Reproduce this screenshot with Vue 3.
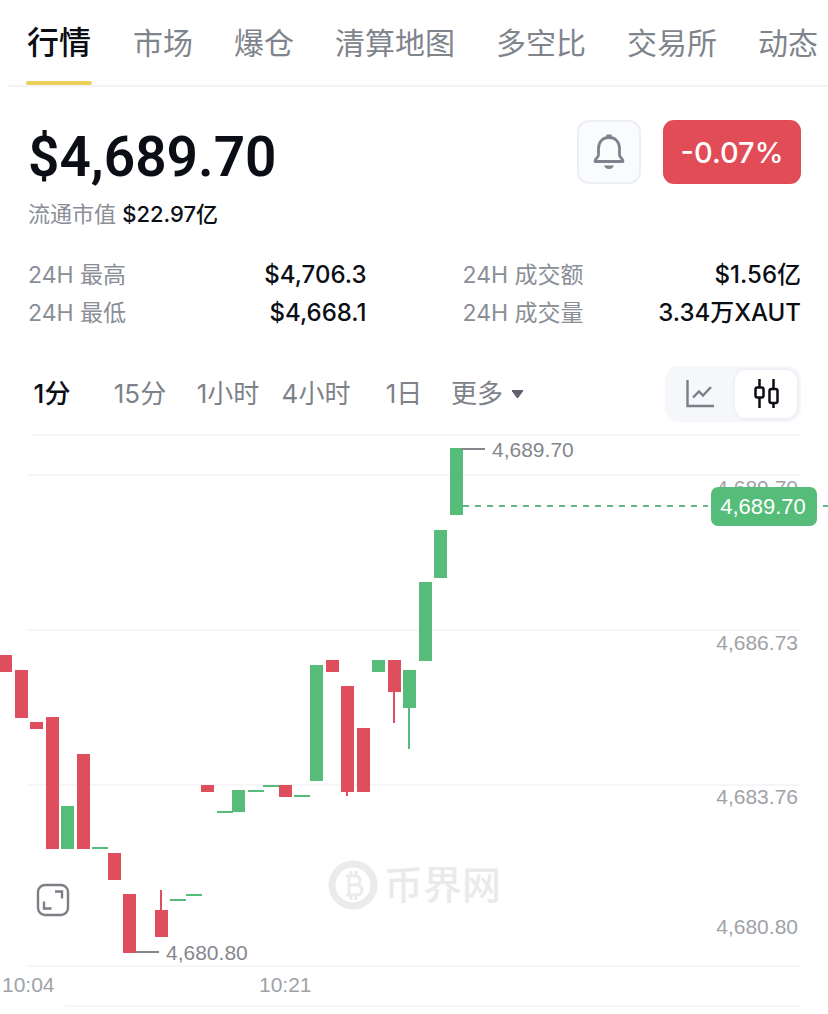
<template>
  <div class="market-page">
    <nav class="tabs">
      <a
        v-for="tab in tabs"
        :key="tab"
        href="#"
        class="tab"
        :class="{ active: activeTab === tab }"
        @click.prevent="activeTab = tab"
      >{{ tab }}</a>
    </nav>

    <header class="summary">
      <div class="price-block">
        <h1 class="price">$4,689.70</h1>
        <p class="cap">流通市值 <strong>$22.97亿</strong></p>
      </div>
      <div class="actions">
        <button class="bell" aria-label="价格提醒">
          <svg width="36" height="40" viewBox="0 0 36 40" fill="none" stroke="#7d828c" stroke-width="2.800" stroke-linejoin="round">
            <path d="M7.500 23V16.500C7.500 9.500 12 5.500 18 5.500S28.500 9.500 28.500 16.500V23C28.500 25.500 32 26 32 29.500H4C4 26 7.500 25.500 7.500 23Z" />
            <path d="M16.500 4h3" stroke-linecap="round" />
            <path d="M13 33.500h10c-1 2.500-2.700 3.500-5 3.500s-4-1-5-3.500z" fill="#7d828c" stroke="none" />
          </svg>
        </button>
        <button class="change">-0.07%</button>
      </div>
    </header>

    <dl class="stats">
      <div v-for="item in stats" :key="item.label" class="stat">
        <dt>{{ item.label }}</dt>
        <dd>{{ item.value }}</dd>
      </div>
    </dl>

    <div class="toolbar">
      <div class="intervals">
        <button
          v-for="item in intervals"
          :key="item"
          class="interval"
          :class="{ active: activeInterval === item }"
          @click="activeInterval = item"
        >{{ item }}</button>
        <div class="more">
          <select aria-label="更多">
            <option>更多</option>
          </select>
          <svg width="13" height="10" viewBox="0 0 13 10"><path d="M1.500 1h10q1.300 0 .5 1.200L7.500 8.400q-1 1.200-2 0L1 2.200Q.2 1 1.500 1z" fill="#5f6470" /></svg>
        </div>
      </div>
      <div class="chart-types">
        <button :class="{ active: chartType === 'line' }" aria-label="折线图" @click="chartType = 'line'">
          <svg width="28" height="28" viewBox="0 0 28 28" fill="none" stroke="#7d7f86" stroke-width="2.400">
            <path d="M1.500 0v26H28" />
            <path d="M7 17.500l6-6 4 4 8-8.500" />
          </svg>
        </button>
        <button :class="{ active: chartType === 'candle' }" aria-label="K线图" @click="chartType = 'candle'">
          <svg width="28" height="30" viewBox="0 0 28 30" fill="none" stroke="#0b0e14" stroke-width="2.500">
            <rect x="3.500" y="8.500" width="8" height="10" rx="2" />
            <path d="M7.500 0v8.500M7.500 18.500V29M21.500 0v10M21.500 24v5" />
            <rect x="17.500" y="10" width="8" height="14" rx="2" />
          </svg>
        </button>
      </div>
    </div>

    <div class="chart">
      <svg class="plot" viewBox="0 430 828 584">
        <g stroke="#f6f6f8" stroke-width="2">
          <line v-for="line in gridLines" :key="line.y" :x1="line.x" x2="800" :y1="line.y" :y2="line.y" />
        </g>

        <!-- watermark -->
        <g class="watermark">
          <circle cx="353" cy="885" r="21" fill="none" stroke="#eaebed" stroke-width="7" />
          <path
            d="M346 876h9q5 0 5 4.500t-5 4.500h-6M349 885h7q6 0 6 5t-6 5h-10M349 876v19M351 871v5M356 871v5M351 895v5M356 895v5"
            fill="none"
            stroke="#eaebed"
            stroke-width="3"
          />
          <text x="384" y="899">币界网</text>
        </g>

        <g v-for="(c, i) in candles" :key="i" :fill="c.up ? '#55bd79' : '#de4e5d'">
          <rect v-if="c.high < c.top || c.low > c.bottom" :x="candleX(i) + 5" :y="c.high" width="2" :height="c.low - c.high" />
          <rect :x="candleX(i)" :y="c.top" :width="c.flat ? 16 : 13" :height="c.bottom - c.top" />
        </g>

        <g stroke="#85858b" stroke-width="2">
          <line x1="461" y1="449" x2="485" y2="449" />
          <line x1="135" y1="952" x2="159" y2="952" />
        </g>
        <text class="extreme" x="492" y="457">4,689.70</text>
        <text class="extreme" x="166" y="960">4,680.80</text>

        <text v-for="label in axisLabels" :key="label.y" class="axis end" x="798" :y="label.y">{{ label.text }}</text>
        <text class="axis" x="2" y="992">10:04</text>
        <text class="axis" x="259" y="992">10:21</text>

        <line x1="463" y1="506" x2="828" y2="506" stroke="#62b888" stroke-width="2" stroke-dasharray="6 6" />
        <rect x="708" y="500" width="112" height="12" fill="#fff" />
        <rect x="711" y="487" width="106" height="39" rx="7" fill="#55bd79" />
        <text class="tag" x="763" y="514">4,689.70</text>
      </svg>

      <button class="fullscreen" aria-label="全屏">
        <svg width="34" height="34" viewBox="0 0 34 34" fill="none" stroke="#7d7f86" stroke-width="2.400">
          <rect x="2" y="2" width="30" height="30" rx="7" />
          <path d="M19 8.500h7v7M8 18.500v7h7.500" />
        </svg>
      </button>
    </div>
  </div>
</template>

<script setup>
import { ref } from 'vue'

const tabs = ['行情', '市场', '爆仓', '清算地图', '多空比', '交易所', '动态']
const activeTab = ref('行情')

const stats = [
  { label: '24H 最高', value: '$4,706.3' },
  { label: '24H 成交额', value: '$1.56亿' },
  { label: '24H 最低', value: '$4,668.1' },
  { label: '24H 成交量', value: '3.34万XAUT' }
]

const intervals = ['1分', '15分', '1小时', '4小时', '1日']
const activeInterval = ref('1分')
const chartType = ref('candle')

const gridLines = [
  { x: 32, y: 435 },
  { x: 28, y: 475 },
  { x: 28, y: 630 },
  { x: 28, y: 785 },
  { x: 28, y: 966 },
  { x: 65, y: 1006 }
]

const axisLabels = [
  { text: '4,689.70', y: 495 },
  { text: '4,686.73', y: 650 },
  { text: '4,683.76', y: 804 },
  { text: '4,680.80', y: 934 }
]

const red = (top, bottom, high = top, low = bottom) => ({ up: false, top, bottom, high, low })
const green = (top, bottom, high = top, low = bottom) => ({ up: true, top, bottom, high, low })
const flat = (y) => ({ up: true, flat: true, top: y, bottom: y + 2, high: y, low: y + 2 })

const candles = [
  red(655, 672),
  red(670, 718),
  red(722, 729),
  red(717, 849),
  green(806, 849),
  red(754, 849),
  flat(847),
  red(853, 880),
  red(894, 953),
  red(0, 0),
  red(910, 937, 890),
  flat(899),
  flat(894),
  red(785, 792),
  flat(811),
  green(790, 812),
  flat(790),
  flat(785),
  red(785, 797),
  flat(795),
  green(665, 781),
  red(660, 672),
  red(686, 792, 686, 796),
  red(728, 792),
  green(660, 672),
  red(660, 692, 660, 723),
  green(670, 708, 670, 749),
  green(582, 661),
  green(530, 578),
  green(448, 515)
]

const candleX = (i) => Math.round(-1 + i * 15.55)
</script>

<style>
body {
  margin: 0;
  background: #fff;
}
</style>

<style scoped>
.market-page {
  font-family: Inter, "Noto Sans CJK SC", sans-serif;
  color: #0b0e14;
}

button,
select {
  font-family: inherit;
  border: none;
  padding: 0;
  background: none;
  color: inherit;
  cursor: pointer;
}

.tabs {
  display: flex;
  gap: 41px;
  height: 85px;
  margin-left: 8px;
  padding-left: 18px;
  border-bottom: 2px solid #f4f4f6;
  overflow: hidden;
}

.tab {
  flex: none;
  font-size: 30px;
  line-height: 87px;
  color: #7f848d;
  text-decoration: none;
}

.tab.active {
  display: flex;
  flex-direction: column;
  padding: 5px 1px 0;
  font-size: 32px;
  font-weight: 500;
  line-height: 76px;
  color: #0b0e14;
}

.tab.active::after {
  content: "";
  height: 4px;
  margin: 0 -1px;
  border-radius: 2px;
  background: #ecd05c;
}

.summary {
  display: flex;
  justify-content: space-between;
  padding: 33px 27px 0 28px;
}

.price {
  margin: 0;
  font-family: Roboto, Inter, sans-serif;
  font-size: 55px;
  font-weight: 600;
  line-height: 74px;
}

.cap {
  margin: 4px 0 0;
  font-size: 22px;
  line-height: 32px;
  color: #8a8e96;
}

.cap strong {
  font-weight: 500;
  color: #0b0e14;
}

.actions {
  display: flex;
  gap: 22px;
}

.bell {
  display: flex;
  align-items: center;
  justify-content: center;
  box-sizing: border-box;
  width: 64px;
  height: 64px;
  border: 2px solid #eceef1;
  border-radius: 12px;
  background: #f9fbfd;
}

.change {
  width: 138px;
  height: 64px;
  border-radius: 11px;
  background: #e14c57;
  color: #fff;
  font-size: 29px;
  font-weight: 500;
}

.stats {
  display: grid;
  grid-template-columns: 1fr 1fr;
  column-gap: 96px;
  margin: 0;
  padding: 26px 27px 0 28px;
  line-height: 38px;
}

.stat {
  display: flex;
  justify-content: space-between;
}

.stat dt {
  font-size: 23px;
  color: #8a8e96;
}

.stat dd {
  margin: 0;
  font-size: 24px;
  font-weight: 500;
}

.toolbar {
  display: flex;
  align-items: center;
  justify-content: space-between;
  padding: 34px 27px 8px 8px;
}

.intervals {
  display: flex;
  flex: 1;
}

.interval {
  flex: 0 1 88px;
  font-size: 26px;
  line-height: 40px;
  white-space: nowrap;
  color: #7d828a;
}

.interval.active {
  font-weight: 500;
  color: #0b0e14;
}

.more {
  display: flex;
  align-items: center;
  margin-left: 3px;
}

.more select {
  appearance: none;
  width: 60px;
  font-size: 26px;
  line-height: 40px;
  color: #7d828a;
}

.chart-types {
  display: flex;
  gap: 4px;
  padding: 4px;
  border-radius: 14px;
  background: #f6f7fb;
}

.chart-types button {
  display: flex;
  align-items: center;
  justify-content: center;
  width: 62px;
  height: 48px;
  border-radius: 11px;
}

.chart-types button.active {
  background: #fff;
  box-shadow: 0 0 4px rgba(20, 20, 50, 0.08);
}

.chart {
  position: relative;
}

.plot {
  display: block;
  width: 100%;
  height: auto;
}

.plot text {
  font-family: "Liberation Sans", Arial, sans-serif;
  font-size: 21px;
}

.plot .extreme {
  fill: #85878d;
}

.plot .axis {
  fill: #a0a2a7;
}

.plot .end {
  text-anchor: end;
}

.plot .tag {
  font-size: 22px;
  fill: #fff;
  text-anchor: middle;
}

.plot .watermark text {
  font-family: "Noto Sans CJK SC", sans-serif;
  font-size: 39px;
  font-weight: 500;
  fill: #e9eaec;
}

/* sits over the lower left corner of the chart */
.fullscreen {
  position: absolute;
  left: 36px;
  bottom: 97px;
  display: flex;
}
</style>
